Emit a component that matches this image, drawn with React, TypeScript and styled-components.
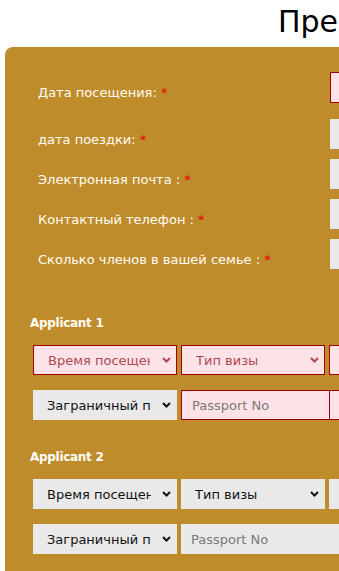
import React from "react";
import styled, { createGlobalStyle } from "styled-components";

const GlobalStyle = createGlobalStyle`
  html, body {
    margin: 0;
    padding: 0;
    background: #ffffff;
    overflow: hidden;
  }
  body {
    font-family: "DejaVu Sans", Verdana, sans-serif;
  }
`;

const Page = styled.div`
  width: 900px;
`;

const Title = styled.h1`
  margin: 0;
  padding: 4px 0 0 278px;
  font-size: 30px;
  line-height: 36px;
  font-weight: normal;
  color: #000;
  white-space: nowrap;
`;

const Panel = styled.div`
  margin: 7px 0 0 5px;
  width: 700px;
  min-height: 560px;
  background: #bf8c2c;
  border-radius: 8px 8px 0 0;
  padding: 25px 0 40px 0;
`;

const InfoList = styled.div`
  display: flex;
  flex-direction: column;
  padding-left: 33px;
`;

const InfoRow = styled.div<{ $gap: number }>`
  display: flex;
  align-items: flex-start;
  margin-bottom: ${(p) => p.$gap}px;
`;

const Label = styled.label`
  width: 292px;
  padding-top: 13px;
  font-size: 13px;
  line-height: 16px;
  color: #fffdf6;
  white-space: nowrap;
`;

const Req = styled.span`
  color: #e60000;
`;

const TextBox = styled.input<{ $invalid?: boolean; $h?: number }>`
  box-sizing: border-box;
  width: 200px;
  height: ${(p) => p.$h ?? 30}px;
  margin: 0;
  padding: 0 10px;
  font-family: "DejaVu Sans", Verdana, sans-serif;
  font-size: 13px;
  color: #222;
  background: ${(p) => (p.$invalid ? "#fde2e7" : "#e9e9e9")};
  border: ${(p) => (p.$invalid ? "1px solid #a10000" : "none")};
  border-radius: 0;
  outline: none;
  &::placeholder {
    color: #7a7a7a;
  }
`;

const Applicant = styled.section<{ $top: number }>`
  margin-top: ${(p) => p.$top}px;
  padding-left: 25px;
`;

const Heading = styled.h3`
  margin: 0;
  font-size: 12px;
  line-height: 16px;
  font-weight: bold;
  letter-spacing: -0.3px;
  color: #fffdf6;
`;

const Fields = styled.div`
  display: grid;
  grid-template-columns: repeat(3, 144px);
  grid-auto-rows: 30px;
  column-gap: 4px;
  row-gap: 15px;
  margin-top: 14px;
  padding-left: 3px;
`;

const SelectWrap = styled.div`
  position: relative;
  width: 100%;
  height: 100%;
`;

const Select = styled.select<{ $invalid?: boolean }>`
  appearance: none;
  -webkit-appearance: none;
  box-sizing: border-box;
  width: 100%;
  height: 100%;
  margin: 0;
  padding: 0 26px 0 14px;
  font-family: "DejaVu Sans", Verdana, sans-serif;
  font-size: 13px;
  color: ${(p) => (p.$invalid ? "#ab4a52" : "#111")};
  background: ${(p) => (p.$invalid ? "#fde2e7" : "#e9e9e9")};
  border: ${(p) => (p.$invalid ? "1px solid #a10000" : "none")};
  border-radius: 0;
  outline: none;
`;

const Chevron = styled.svg`
  position: absolute;
  right: 6px;
  top: 50%;
  margin-top: -3px;
  pointer-events: none;
`;

const Field = styled.div`
  width: 100%;
  height: 100%;
  display: flex;
`;

function Drop({ text, invalid }: { text: string; invalid?: boolean }) {
  return (
    <SelectWrap>
      <Select $invalid={invalid} defaultValue="">
        <option value="">{text}</option>
      </Select>
      <Chevron width="9" height="6" viewBox="0 0 9 6">
        <path
          d="M1 1 L4.5 4.5 L8 1"
          fill="none"
          stroke={invalid ? "#b0474f" : "#111"}
          strokeWidth="2"
        />
      </Chevron>
    </SelectWrap>
  );
}

const infoRows = [
  { label: "Дата посещения:", gap: 16, h: 31, invalid: true },
  { label: "дата поездки:", gap: 10, h: 30, invalid: false },
  { label: "Электронная почта :", gap: 10, h: 30, invalid: false },
  { label: "Контактный телефон :", gap: 10, h: 30, invalid: false },
  { label: "Сколько членов в вашей семье :", gap: 0, h: 30, invalid: false },
];

function ApplicantBlock({ n, invalid, top }: { n: number; invalid: boolean; top: number }) {
  return (
    <Applicant $top={top}>
      <Heading>Applicant {n}</Heading>
      <Fields>
        <Drop text="Время посещения" invalid={invalid} />
        <Drop text="Тип визы" invalid={invalid} />
        <Field>
          <TextBox $invalid={invalid} />
        </Field>
        <Drop text="Заграничный паспорт" />
        <Field>
          <TextBox $invalid={invalid} placeholder="Passport No" />
        </Field>
        <Field>
          <TextBox $invalid={invalid} />
        </Field>
      </Fields>
    </Applicant>
  );
}

export default function App() {
  return (
    <Page>
      <GlobalStyle />
      <Title>Предварительная запись</Title>
      <Panel>
        <InfoList>
          {infoRows.map((r) => (
            <InfoRow key={r.label} $gap={r.gap}>
              <Label>
                {r.label} <Req>*</Req>
              </Label>
              <TextBox $invalid={r.invalid} $h={r.h} />
            </InfoRow>
          ))}
        </InfoList>
        <ApplicantBlock n={1} invalid={true} top={46} />
        <ApplicantBlock n={2} invalid={false} top={29} />
      </Panel>
    </Page>
  );
}
